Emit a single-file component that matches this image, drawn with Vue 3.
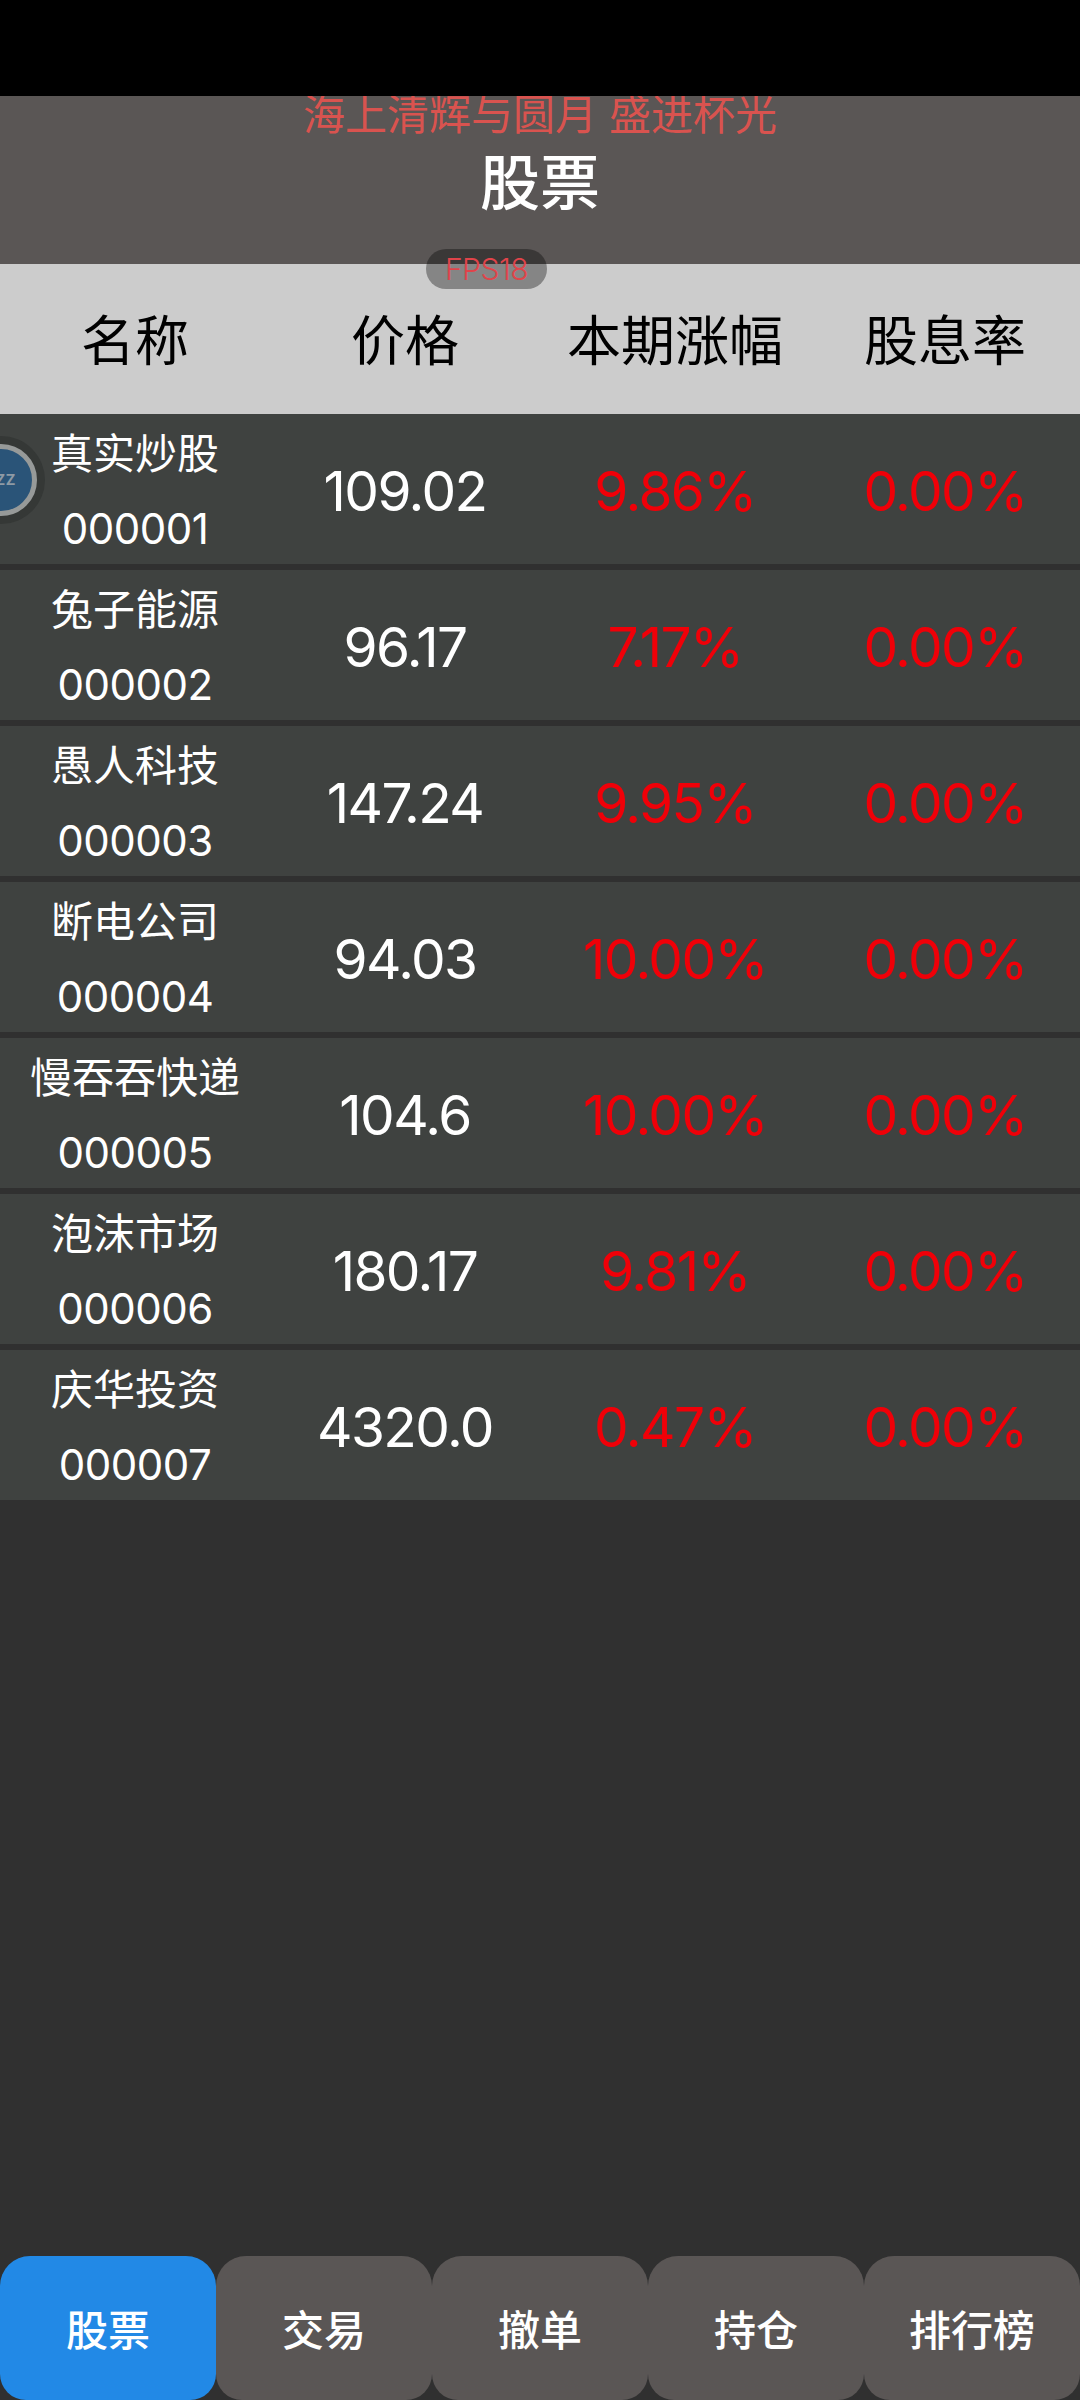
<template>
  <div class="page">
    <div class="status"></div>
    <div class="title-bar">
      <div class="notice">海上清辉与圆月 盛进杯光</div>
      <div class="title">股票</div>
    </div>
    <div class="fps">FPS18</div>
    <div class="table-head">
      <div class="cell" v-for="h in heads" :key="h">{{ h }}</div>
    </div>
    <div class="rows">
      <div class="row" v-for="s in stocks" :key="s.code">
        <div class="cell name">
          <span>{{ s.name }}</span>
          <span class="code">{{ s.code }}</span>
        </div>
        <div class="cell price">{{ s.price }}</div>
        <div class="cell red">{{ s.rise }}</div>
        <div class="cell red">0.00%</div>
      </div>
    </div>
    <div class="ball"><span>ZZ</span></div>
    <div class="tabs">
      <div
        v-for="(t, i) in tabs"
        :key="t"
        :class="['tab', { active: i === 0 }]"
      >{{ t }}</div>
    </div>
  </div>
</template>

<script setup>
const heads = ['名称', '价格', '本期涨幅', '股息率'];
const tabs = ['股票', '交易', '撤单', '持仓', '排行榜'];

const stocks = [
  { name: '真实炒股', code: '000001', price: '109.02', rise: '9.86%' },
  { name: '兔子能源', code: '000002', price: '96.17', rise: '7.17%' },
  { name: '愚人科技', code: '000003', price: '147.24', rise: '9.95%' },
  { name: '断电公司', code: '000004', price: '94.03', rise: '10.00%' },
  { name: '慢吞吞快递', code: '000005', price: '104.6', rise: '10.00%' },
  { name: '泡沫市场', code: '000006', price: '180.17', rise: '9.81%' },
  { name: '庆华投资', code: '000007', price: '4320.0', rise: '0.47%' },
];
</script>

<style>
html, body {
  margin: 0;
  background: #303030;
}
</style>

<style scoped>
.page {
  position: relative;
  width: 1080px;
  height: 2400px;
  display: flex;
  flex-direction: column;
  overflow: hidden;
  background: #303030;
  font-family: Inter, "Noto Sans CJK SC", sans-serif;
  color: #fff;
}

.status {
  height: 96px;
  background: #000;
}

.title-bar {
  height: 168px;
  background: #5a5655;
  display: flex;
  flex-direction: column;
  align-items: center;
  overflow: hidden;
}

.notice {
  height: 50px;
  margin-top: -6px;
  font-size: 42px;
  line-height: 50px;
  color: #d9534f;
}

.title {
  margin-top: 1px;
  font-size: 60px;
  line-height: 84px;
  font-weight: 500;
}

.fps {
  position: absolute;
  top: 249px;
  left: 426px;
  width: 121px;
  height: 40px;
  border-radius: 20px;
  background: rgba(0, 0, 0, 0.35);
  color: #e0444a;
  font-size: 30px;
  font-weight: 300;
  letter-spacing: -0.5px;
  line-height: 40px;
  text-align: center;
}

.table-head {
  height: 150px;
  box-sizing: border-box;
  padding-bottom: 3px;
  background: #cccccc;
  color: #000;
  display: grid;
  grid-template-columns: repeat(4, 270px);
  font-size: 54px;
}

.cell {
  display: flex;
  align-items: center;
  justify-content: center;
}

.rows {
  display: flex;
  flex-direction: column;
  gap: 6px;
}

.row {
  height: 150px;
  box-sizing: border-box;
  padding-top: 2px;
  background: #3f4240;
  display: grid;
  grid-template-columns: repeat(4, 270px);
  font-size: 55px;
  font-weight: 400;
  letter-spacing: -1.6px;
}

.name {
  flex-direction: column;
  font-size: 42px;
  line-height: 75px;
  letter-spacing: 0;
}

.code {
  letter-spacing: -0.5px;
}

.price {
  color: #fff;
}

.red {
  color: #f00008;
}

.ball {
  position: absolute;
  top: 436px;
  left: -43px;
  width: 88px;
  height: 88px;
  border-radius: 50%;
  background: #353836;
  display: flex;
  align-items: center;
  justify-content: center;
}

.ball span {
  width: 72px;
  height: 72px;
  box-sizing: border-box;
  border-radius: 50%;
  border: 5px solid #979a99;
  background: #2a5478;
  color: #8d9aa5;
  font-family: Roboto, sans-serif;
  font-size: 15px;
  font-weight: 700;
  letter-spacing: 1px;
  line-height: 62px;
  text-align: right;
  padding-right: 16px;
}

.tabs {
  margin-top: auto;
  height: 144px;
  display: grid;
  grid-template-columns: repeat(5, 216px);
}

.tab {
  display: flex;
  align-items: center;
  justify-content: center;
  box-sizing: border-box;
  padding-bottom: 2px;
  background: #5a5655;
  border-radius: 30px 30px 26px 26px;
  font-size: 42px;
  font-weight: 500;
}

.tab.active {
  background: #2289e6;
}
</style>
